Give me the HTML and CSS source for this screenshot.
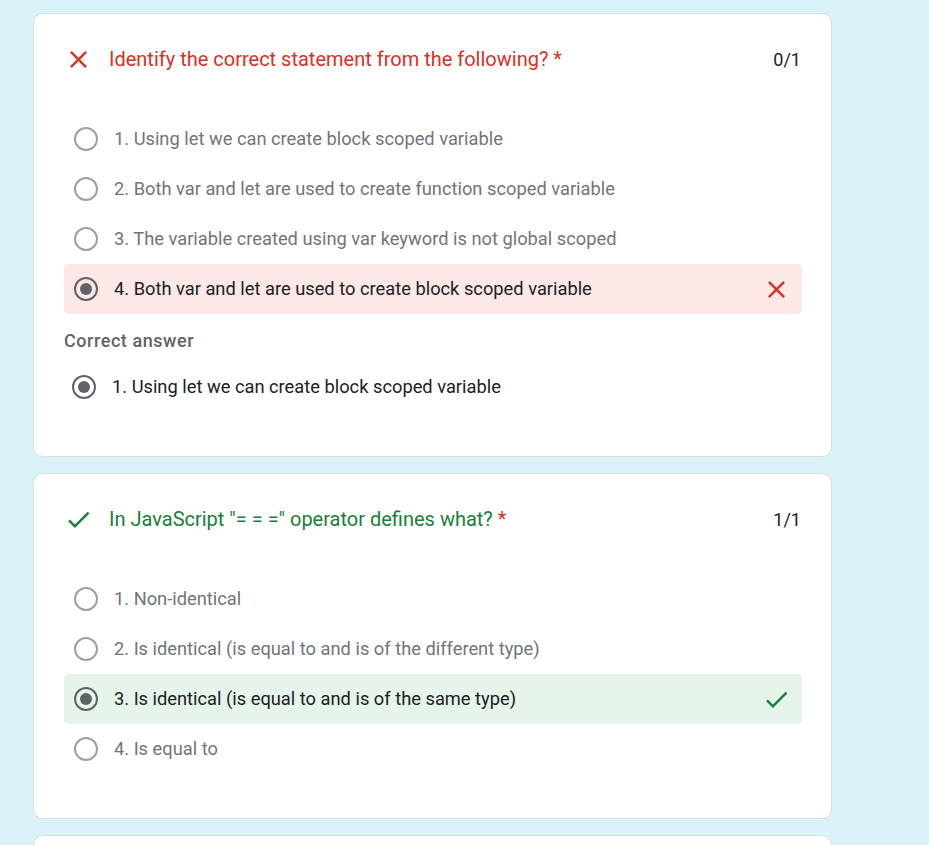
FILE: index.html
```html
<!DOCTYPE html>
<html>
<head>
<meta charset="utf-8">
<link rel="stylesheet" href="styles.css">
</head>
<body>
<div class="list">
  <section class="card">
    <div class="qhead wrong">
      <svg class="qicon" viewBox="0 0 24 24"><path d="M19 6.41L17.59 5 12 10.59 6.41 5 5 6.41 10.59 12 5 17.59 6.41 19 12 13.41 17.59 19 19 17.59 13.41 12z"/></svg>
      <div class="qtitle">Identify the correct statement from the following? <span class="req">*</span></div>
      <div class="score">0/1</div>
    </div>
    <div class="options">
      <div class="opt"><span class="radio"></span><span class="otext">1. Using let we can create block scoped variable</span></div>
      <div class="opt"><span class="radio"></span><span class="otext">2. Both var and let are used to create function scoped variable</span></div>
      <div class="opt"><span class="radio"></span><span class="otext">3. The variable created using var keyword is not global scoped</span></div>
      <div class="opt opt-wrong"><span class="radio on"></span><span class="otext sel">4. Both var and let are used to create block scoped variable</span>
        <svg class="mark red" viewBox="0 0 24 24"><path d="M19 6.41L17.59 5 12 10.59 6.41 5 5 6.41 10.59 12 5 17.59 6.41 19 12 13.41 17.59 19 19 17.59 13.41 12z"/></svg>
      </div>
    </div>
    <div class="clabel">Correct answer</div>
    <div class="opt opt-correct-answer"><span class="radio on"></span><span class="otext sel">1. Using let we can create block scoped variable</span></div>
  </section>

  <section class="card">
    <div class="qhead right">
      <svg class="qicon" viewBox="0 0 24 24"><path d="M9 16.17L4.83 12l-1.42 1.41L9 19 21 7l-1.41-1.41z"/></svg>
      <div class="qtitle">In JavaScript "= = =" operator defines what? <span class="req">*</span></div>
      <div class="score">1/1</div>
    </div>
    <div class="options">
      <div class="opt"><span class="radio"></span><span class="otext">1. Non-identical</span></div>
      <div class="opt"><span class="radio"></span><span class="otext">2. Is identical (is equal to and is of the different type)</span></div>
      <div class="opt opt-right"><span class="radio on"></span><span class="otext sel">3. Is identical (is equal to and is of the same type)</span>
        <svg class="mark green" viewBox="0 0 24 24"><path d="M9 16.17L4.83 12l-1.42 1.41L9 19 21 7l-1.41-1.41z"/></svg>
      </div>
      <div class="opt"><span class="radio"></span><span class="otext">4. Is equal to</span></div>
    </div>
  </section>

  <section class="card card-stub"></section>
</div>
</body>
</html>
```

FILE: styles.css
```css
* { box-sizing: border-box; }
html, body {
  margin: 0;
  background: #d9f3f8;
  font-family: Roboto, "Liberation Sans", Arial, sans-serif;
}
body { padding: 13px 0 0 33px; overflow: hidden; height: 845px; }
.list { display: flex; flex-direction: column; gap: 16px; width: 799px; }
.card {
  background: #fff;
  border: 1px solid #dadce0;
  border-radius: 10px;
  padding: 31px 29px 44px 30px;
}
.card-stub { height: 60px; }
.qhead {
  display: flex;
  align-items: center;
  height: 28px;
}
.qicon { width: 29px; height: 29px; flex: none; margin-right: 16px; }
.wrong .qicon { fill: #d93025; }
.right .qicon { fill: #188038; }
.qtitle { flex: 1; font-size: 20px; }
.wrong .qtitle { color: #d93025; }
.right .qtitle { color: #188038; }
.req { color: #d93025; }
.score { font-size: 18px; color: #202124; margin-right: 1px; }
.options { margin-top: 41px; display: flex; flex-direction: column; }
.opt {
  display: flex;
  align-items: center;
  height: 50px;
  padding: 0 11px 0 10px;
  border-radius: 5px;
}
.opt-wrong { background: #fce8e6; }
.opt-right { background: #e6f4ea; }
.radio {
  width: 24px; height: 24px; flex: none;
  border: 2.4px solid #9aa0a6;
  border-radius: 50%;
  margin-right: 16px;
  display: flex; align-items: center; justify-content: center;
}
.radio.on { border-color: #5f6368; }
.radio.on::after {
  content: "";
  width: 12px; height: 12px; border-radius: 50%;
  background: #5f6368;
}
.otext { flex: 1; font-size: 18.3px; color: #70757a; padding-bottom: 2px; }
.otext.sel { color: #202124; }
.mark { width: 29px; height: 29px; flex: none; }
.mark.red { fill: #d93025; }
.mark.green { fill: #188038; }
.clabel {
  margin-top: 17px;
  font-size: 18px;
  font-weight: 500;
  line-height: 20px;
  letter-spacing: 0.55px;
  color: #5f6368;
}
.opt-correct-answer { margin-top: 11px; padding-left: 8px; }
```
